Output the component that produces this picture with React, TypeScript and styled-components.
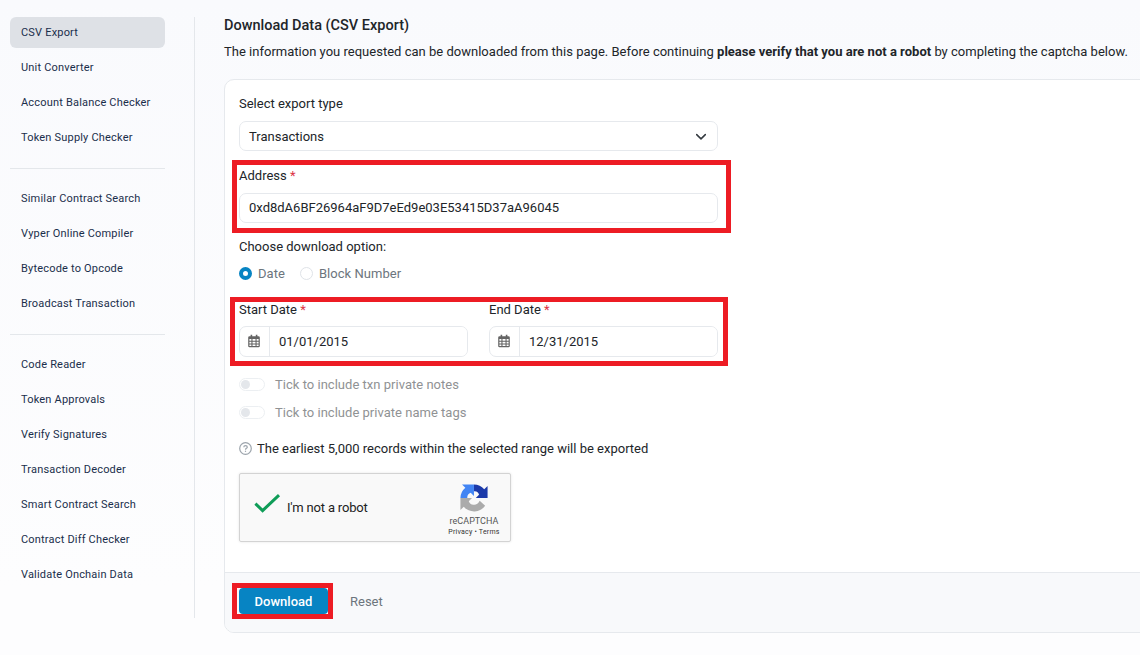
import React from 'react';
import styled, { createGlobalStyle, css } from 'styled-components';

const GlobalStyle = createGlobalStyle`
  *, *::before, *::after { box-sizing: border-box; }
  html, body { margin: 0; padding: 0; }
  body {
    font-family: Roboto, "Liberation Sans", sans-serif;
    font-size: 13px;
    line-height: 20px;
    color: #212529;
    background: #fdfdfe;
    overflow: hidden;
  }
  button, input { font: inherit; letter-spacing: inherit; }
`;

const Page = styled.div`
  display: flex;
  width: 1140px;
  height: 655px;
  padding: 17px 0 0 10px;
  overflow: hidden;
  background: linear-gradient(#f9fafd, #fdfdfe 90%);
`;

const Sidebar = styled.nav`
  flex: none;
  width: 185px;
  height: 601px;
  padding-right: 29px;
  border-right: 1px solid #e4e7eb;
`;

const NavGroup = styled.div`
  display: flex;
  flex-direction: column;
  gap: 4px;

  & + & {
    margin-top: 15px;
    padding-top: 14px;
    border-top: 1px solid #e4e7eb;
  }
`;

const NavItem = styled.a<{ $active?: boolean }>`
  display: flex;
  align-items: center;
  height: 31px;
  padding: 0 11px;
  border-radius: 6px;
  font-size: 11px;
  font-weight: 450;
  letter-spacing: 0.19px;
  white-space: nowrap;
  color: #1a2e4b;
  background: ${(p) => (p.$active ? '#dee1e6' : 'transparent')};
`;

const Main = styled.main`
  flex: none;
  width: 945px;
  margin-left: 29px;
`;

const Title = styled.h1`
  margin: -1px 0 6px;
  font-size: 14.5px;
  font-weight: 480;
  line-height: 20px;
`;

const Intro = styled.p`
  margin: 0 0 17px;
  line-height: 20px;
  white-space: nowrap;
  letter-spacing: 0.012px;
`;

const Strong = styled.strong`
  font-weight: 700;
`;

const Card = styled.section`
  height: 554px;
  display: flex;
  flex-direction: column;
  border: 1px solid #e6e9ed;
  border-radius: 10px;
  background: #fff;
  overflow: hidden;
`;

const CardBody = styled.form`
  flex: 1;
  width: 493px;
  padding: 13px 0 0 14px;
`;

const CardFooter = styled.footer`
  display: flex;
  align-items: flex-start;
  height: 60px;
  padding: 15px 14px 0;
  border-top: 1px solid #e6e9ed;
  background: #f8f9fb;
`;

const Field = styled.div<{ $gap?: number }>`
  position: relative;
  margin-bottom: ${(p) => p.$gap ?? 0}px;
`;

const Label = styled.label`
  display: block;
  height: 20px;
  line-height: 22px;
`;

const Required = styled.span`
  color: #dc3545;
`;

const controlBox = css`
  height: 30px;
  border: 1px solid #e6e9ed;
  border-radius: 7px;
  background: #fff;
`;

const Select = styled.div`
  ${controlBox}
  display: flex;
  align-items: center;
  justify-content: space-between;
  margin-top: 8px;
  padding: 1px 10px 0 9px;
  line-height: 21px;
`;

const TextInput = styled.input`
  ${controlBox}
  display: block;
  width: 100%;
  margin-top: 8px;
  padding: 0 9px 2px;
  color: #212529;
  outline: none;
`;

const Highlight = styled.div<{ $inset: string }>`
  position: absolute;
  inset: ${(p) => p.$inset};
  border: 5px solid #ed1c24;
  pointer-events: none;
`;

const Radios = styled.div`
  display: flex;
  gap: 15px;
  height: 20px;
  margin: 7px 0 16px;
  line-height: 22px;
  letter-spacing: 0.04px;
  color: #6c757d;
`;

const RadioLabel = styled.label`
  display: flex;
  height: 20px;
  align-items: center;
  gap: 6px;
`;

const RadioText = styled.span`
  height: 20px;
`;

const RadioDot = styled.span<{ $checked?: boolean }>`
  width: 13px;
  height: 13px;
  border-radius: 50%;
  background: #fff;
  border: ${(p) => (p.$checked ? '4px solid #0784c3' : '1px solid #dfe3e8')};
`;

const DateRow = styled.div`
  position: relative;
  display: grid;
  grid-template-columns: 229px 229px;
  column-gap: 21px;
  margin-bottom: 17px;
`;

const DateControl = styled.div`
  ${controlBox}
  display: flex;
  height: 31px;
  margin-top: 7px;
  overflow: hidden;
`;

const CalendarCell = styled.span`
  display: flex;
  align-items: center;
  justify-content: center;
  width: 30px;
  padding: 0 1px 1px 0;
  border-right: 1px solid #e6e9ed;
`;

const DateInput = styled.input`
  flex: 1;
  min-width: 0;
  padding: 0 8px 0 9px;
  border: 0;
  outline: none;
  color: #212529;
`;

const ToggleRow = styled.label`
  display: flex;
  align-items: center;
  gap: 10px;
  height: 20px;
  margin-bottom: 8px;
  line-height: 22px;
  letter-spacing: 0.02px;
  color: #909294;
`;

const RowText = styled.span`
  height: 20px;
`;

const ToggleTrack = styled.span`
  display: flex;
  align-items: center;
  width: 26px;
  height: 13px;
  padding-left: 1px;
  border: 1px solid #eceff2;
  border-radius: 7px;
  background: #fff;

  &::before {
    content: '';
    width: 9px;
    height: 9px;
    border-radius: 50%;
    background: #e4e7eb;
  }
`;

const Note = styled.p`
  display: flex;
  align-items: center;
  gap: 5px;
  height: 20px;
  margin: 16px 0 15px;
  line-height: 22px;
`;

const Captcha = styled.div`
  display: flex;
  width: 272px;
  height: 69px;
  border: 1px solid #d3d3d3;
  border-radius: 2px;
  background: #f9f9f9;
  box-shadow: 0 0 3px rgba(0, 0, 0, 0.1);
`;

const CaptchaCheck = styled.div`
  display: flex;
  align-items: center;
  gap: 6px;
  flex: 1;
  padding-left: 14px;

  svg {
    margin-bottom: 7px;
  }
`;

const CaptchaText = styled.span`
  letter-spacing: -0.18px;
  color: #222;
`;

const CaptchaBrand = styled.div`
  display: flex;
  flex-direction: column;
  align-items: center;
  width: 72px;
  padding-top: 10px;
`;

const BrandName = styled.span`
  margin-top: 4px;
  font-size: 9px;
  line-height: 11px;
  letter-spacing: 0.02px;
  color: #555;
`;

const BrandLinks = styled.span`
  font-size: 7px;
  line-height: 11px;
  letter-spacing: 0.22px;
  white-space: nowrap;
  color: #333;
`;

const DownloadWrap = styled.div`
  position: relative;
  background: #fff;
`;

const DownloadButton = styled.button`
  display: block;
  width: 89px;
  height: 26px;
  padding: 1px 0 0;
  border: 0;
  border-radius: 4px;
  font-weight: 480;
  color: #fff;
  background: #0784c3;
`;

const ResetLink = styled.a`
  margin: 4px 0 0 22px;
  color: #6c757d;
`;

const Chevron = () => (
  <svg width="12" height="12" viewBox="0 0 12 12" fill="none" stroke="#343a40" strokeWidth="1.5" strokeLinecap="round" strokeLinejoin="round">
    <path d="M1.7 3.6 6 7.9 10.3 3.6" />
  </svg>
);

const CalendarIcon = () => (
  <svg width="12" height="14" viewBox="0 0 12 14">
    <path
      fill="#646464"
      fillRule="evenodd"
      d="M2.6 .7h1.6v1.5h3.6V.7h1.6v1.5h1.1Q11.8 2.2 11.8 3.5V12Q11.8 13.2 10.5 13.2H1.5Q.2 13.2.2 12V3.5Q.2 2.2 1.5 2.2h1.1ZM1.4 5.1v1.7h2V5.1ZM4.5 5.1v1.7h3V5.1ZM8.6 5.1v1.7h2V5.1ZM1.4 7.8v1.6h2V7.8ZM4.5 7.8v1.6h3V7.8ZM8.6 7.8v1.6h2V7.8ZM1.4 10.4v1.7h2v-1.7ZM4.5 10.4v1.7h3v-1.7ZM8.6 10.4v1.7h2v-1.7Z"
    />
  </svg>
);

const QuestionIcon = () => (
  <svg width="13" height="13" viewBox="0 0 13 13" fill="none" stroke="#9ca4ac" strokeWidth="1.2">
    <circle cx="6.5" cy="6.5" r="5.8" />
    <path d="M4.8 5.2C4.8 3.2 8.3 3.2 8.3 5.2 8.3 6.4 6.5 6.3 6.5 7.7" />
    <path d="M6.5 8.7v1.2" />
  </svg>
);

const CheckIcon = () => (
  <svg width="27" height="22" viewBox="0 0 27 22" fill="none" stroke="#0f9d58" strokeWidth="3">
    <path d="M1.4 10.6 8.6 17.6 25 2.2" />
  </svg>
);

const CaptchaLogo = () => (
  <svg width="28" height="28" viewBox="0 0 64 64">
    <path fill="#1c3aa9" d="M63 32V4.6l-7.6 7.6A31 31 0 0 0 31.9 1v15.5C39 16 42 19 43.5 24.5L36 32Z" />
    <path fill="#4285f4" d="M31.9 1H4.6l7.6 7.6A31 31 0 0 0 1 32h15.5c0-7 3-10.5 8-12l7.4 7.5Z" />
    <path fill="#ababab" d="M1 32v27.4l7.6-7.6A31 31 0 0 0 57.5 49.5L45 38.5C42 45 37 48 31 47.5 25 47 21.500 44 20 39.500L27.500 32Z" />
  </svg>
);

const NAV_GROUPS: string[][] = [
  ['CSV Export', 'Unit Converter', 'Account Balance Checker', 'Token Supply Checker'],
  ['Similar Contract Search', 'Vyper Online Compiler', 'Bytecode to Opcode', 'Broadcast Transaction'],
  [
    'Code Reader',
    'Token Approvals',
    'Verify Signatures',
    'Transaction Decoder',
    'Smart Contract Search',
    'Contract Diff Checker',
    'Validate Onchain Data',
  ],
];

const DateField = ({ label, value }: { label: string; value: string }) => (
  <div>
    <Label>
      {label} <Required>*</Required>
    </Label>
    <DateControl>
      <CalendarCell>
        <CalendarIcon />
      </CalendarCell>
      <DateInput defaultValue={value} />
    </DateControl>
  </div>
);

export default function App() {
  return (
    <>
      <GlobalStyle />
      <Page>
        <Sidebar>
          {NAV_GROUPS.map((group) => (
            <NavGroup key={group[0]}>
              {group.map((item) => (
                <NavItem key={item} $active={item === 'CSV Export'}>
                  {item}
                </NavItem>
              ))}
            </NavGroup>
          ))}
        </Sidebar>
        <Main>
          <Title>Download Data (CSV Export)</Title>
          <Intro>
            The information you requested can be downloaded from this page. Before continuing{' '}
            <Strong>please verify that you are not a robot</Strong> by completing the captcha below.
          </Intro>
          <Card>
            <CardBody>
              <Field $gap={14}>
                <Label>Select export type</Label>
                <Select>
                  Transactions
                  <Chevron />
                </Select>
              </Field>
              <Field $gap={13}>
                <Label>
                  Address <Required>*</Required>
                </Label>
                <TextInput defaultValue="0xd8dA6BF26964aF9D7eEd9e03E53415D37aA96045" />
                <Highlight $inset="-5px -13px -10px -7px" />
              </Field>
              <Label>Choose download option:</Label>
              <Radios>
                <RadioLabel>
                  <RadioDot $checked />
                  <RadioText>Date</RadioText>
                </RadioLabel>
                <RadioLabel>
                  <RadioDot />
                  <RadioText>Block Number</RadioText>
                </RadioLabel>
              </Radios>
              <DateRow>
                <DateField label="Start Date" value="01/01/2015" />
                <DateField label="End Date" value="12/31/2015" />
                <Highlight $inset="-2px -10px -9px -9px" />
              </DateRow>
              <ToggleRow>
                <ToggleTrack />
                <RowText>Tick to include txn private notes</RowText>
              </ToggleRow>
              <ToggleRow>
                <ToggleTrack />
                <RowText>Tick to include private name tags</RowText>
              </ToggleRow>
              <Note>
                <QuestionIcon />
                <RowText>The earliest 5,000 records within the selected range will be exported</RowText>
              </Note>
              <Captcha>
                <CaptchaCheck>
                  <CheckIcon />
                  <CaptchaText>I'm not a robot</CaptchaText>
                </CaptchaCheck>
                <CaptchaBrand>
                  <CaptchaLogo />
                  <BrandName>reCAPTCHA</BrandName>
                  <BrandLinks>Privacy • Terms</BrandLinks>
                </CaptchaBrand>
              </Captcha>
            </CardBody>
            <CardFooter>
              <DownloadWrap>
                <DownloadButton>Download</DownloadButton>
                <Highlight $inset="-5px -5px -5px -7px" />
              </DownloadWrap>
              <ResetLink>Reset</ResetLink>
            </CardFooter>
          </Card>
        </Main>
      </Page>
    </>
  );
}
